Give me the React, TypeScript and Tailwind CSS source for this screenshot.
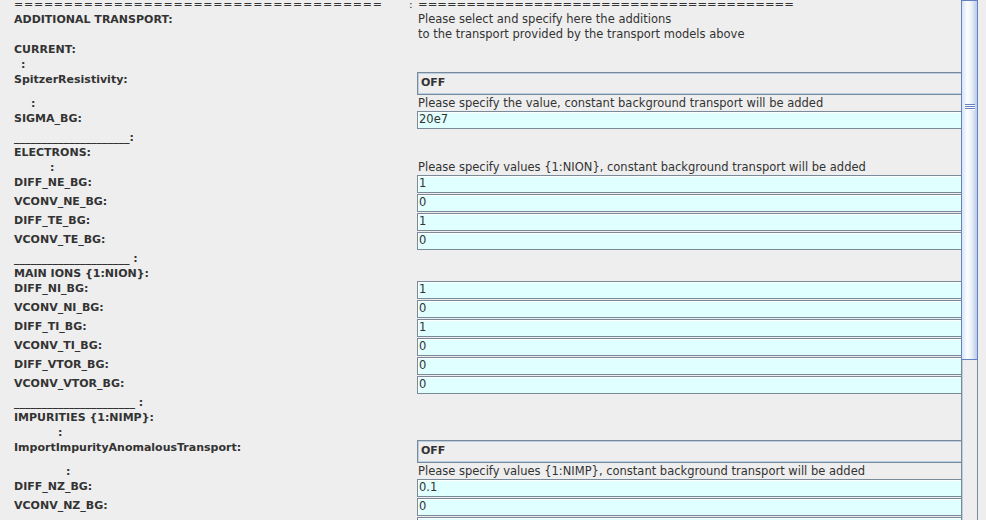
import React from "react";

type Row =
  | { t: "sep" }
  | { t: "intro" }
  | { t: "text"; label: string; pad?: number; right?: string }
  | { t: "combo"; label: string }
  | { t: "field"; label: string; value: string };

const U = "_";
const rows: Row[] = [
  { t: "sep" },
  { t: "intro" },
  { t: "text", label: "CURRENT:" },
  { t: "text", label: ":", pad: 21 },
  { t: "combo", label: "SpitzerResistivity:" },
  { t: "text", label: ":", pad: 31, right: "Please specify the value, constant background transport will be added" },
  { t: "field", label: "SIGMA_BG:", value: "20e7" },
  { t: "text", label: U.repeat(21) + ":" },
  { t: "text", label: "ELECTRONS:" },
  { t: "text", label: ":", pad: 50, right: "Please specify values {1:NION}, constant background transport will be added" },
  { t: "field", label: "DIFF_NE_BG:", value: "1" },
  { t: "field", label: "VCONV_NE_BG:", value: "0" },
  { t: "field", label: "DIFF_TE_BG:", value: "1" },
  { t: "field", label: "VCONV_TE_BG:", value: "0" },
  { t: "text", label: U.repeat(21) + " :" },
  { t: "text", label: "MAIN IONS {1:NION}:" },
  { t: "field", label: "DIFF_NI_BG:", value: "1" },
  { t: "field", label: "VCONV_NI_BG:", value: "0" },
  { t: "field", label: "DIFF_TI_BG:", value: "1" },
  { t: "field", label: "VCONV_TI_BG:", value: "0" },
  { t: "field", label: "DIFF_VTOR_BG:", value: "0" },
  { t: "field", label: "VCONV_VTOR_BG:", value: "0" },
  { t: "text", label: U.repeat(22) + " :" },
  { t: "text", label: "IMPURITIES {1:NIMP}:" },
  { t: "text", label: ":", pad: 58 },
  { t: "combo", label: "ImportImpurityAnomalousTransport:" },
  { t: "text", label: ":", pad: 66, right: "Please specify values {1:NIMP}, constant background transport will be added" },
  { t: "field", label: "DIFF_NZ_BG:", value: "0.1" },
  { t: "field", label: "VCONV_NZ_BG:", value: "0" },
  { t: "field", label: "", value: "" },
];

const labelCls =
  "w-[417px] shrink-0 font-bold text-[11px] leading-[15px] text-[#333333] whitespace-nowrap";
const plainCls = "text-[11.5px] leading-[15px] text-[#333333] whitespace-nowrap";

function RowView({ r }: { r: Row }) {
  if (r.t === "sep") {
    return (
      <div className="flex h-[15px]">
        <div className={labelCls + " pl-[14px] flex font-normal text-[11.5px]"}>
          <span className="w-[395px] tracking-[0.75px]">{"=".repeat(37)}</span>
          <span>:</span>
        </div>
        <div className={plainCls + " pl-[1px]"}>{"=".repeat(39)}</div>
      </div>
    );
  }
  if (r.t === "intro") {
    return (
      <div className="flex h-[30px]">
        <div className={labelCls + " pl-[14px]"}>ADDITIONAL TRANSPORT:</div>
        <div className="flex flex-col pl-[1px]">
          <div className={plainCls}>Please select and specify here the additions</div>
          <div className={plainCls}>to the transport provided by the transport models above</div>
        </div>
      </div>
    );
  }
  if (r.t === "text") {
    return (
      <div className="flex h-[15px]">
        <div className={labelCls} style={{ paddingLeft: r.pad ?? 14 }}>
          {r.label}
        </div>
        {r.right && <div className={plainCls + " pl-[1px]"}>{r.right}</div>}
      </div>
    );
  }
  if (r.t === "combo") {
    return (
      <div className="flex h-[24px]">
        <div className={labelCls + " pl-[14px]"}>{r.label}</div>
        <div className="w-[580px] shrink-0 h-[23px] border border-[#7a8a99] bg-[#eeeeee] shadow-[inset_1px_1px_0_#b8cfe5,inset_-1px_-1px_0_#b8cfe5] flex items-center pl-[3px] font-bold text-[11px] text-[#333333]">
          OFF
        </div>
      </div>
    );
  }
  return (
    <div className="flex h-[19px]">
      <div className={labelCls + " pl-[14px]"}>{r.label}</div>
      <div className="w-[580px] shrink-0 h-[18px] border border-[#7a8a99] bg-[#e0ffff] shadow-[inset_1px_1px_0_#ffffff] flex items-center pl-[1px] text-[11.5px] text-[#333333]">
        {r.value}
      </div>
    </div>
  );
}

export default function App() {
  return (
    <div
      className="w-[986px] h-[520px] bg-[#eeeeee] flex overflow-hidden"
      style={{ fontFamily: '"DejaVu Sans", sans-serif' }}
    >
      <div className="w-[961px] h-[520px] shrink-0 overflow-hidden">
        <div className="-mt-[3px] flex flex-col">
          {rows.map((r, i) => (
            <RowView key={i} r={r} />
          ))}
        </div>
      </div>
      <div className="w-[17px] shrink-0 h-[520px] flex flex-col">
        <div className="h-[360px] shrink-0 border border-[#6382bf] bg-[linear-gradient(to_right,#d8e4f2,#fbfdff_35%,#eef3fa_60%,#b8cbe6)] flex flex-col items-center pt-[103px]">
          <div className="w-[10px] flex flex-col">
            <div className="h-[1px] bg-[#6382bf]" />
            <div className="h-[1px] bg-white" />
            <div className="h-[1px] bg-[#6382bf]" />
            <div className="h-[1px] bg-white" />
            <div className="h-[1px] bg-[#6382bf]" />
            <div className="h-[1px] bg-white" />
          </div>
        </div>
        <div className="flex-1 border-l border-r border-[#7a8a99] bg-[#eeeeee] shadow-[inset_1px_0_0_#b8cfe5]" />
      </div>
      <div className="flex-1" />
    </div>
  );
}
